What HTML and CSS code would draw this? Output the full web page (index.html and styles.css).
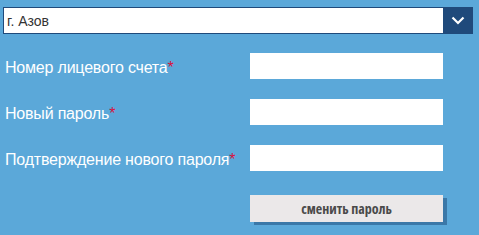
FILE: index.html
```html
<!DOCTYPE html>
<html lang="ru">
<head>
<meta charset="utf-8">
<link rel="stylesheet" href="styles.css">
</head>
<body>
<div class="page">
  <div class="select">
    <span class="select-text">г. Азов</span>
    <span class="select-btn">
      <svg width="14" height="9" viewBox="0 0 14 9"><path d="M1.5 1.5 L7 7 L12.5 1.5" fill="none" stroke="#fff" stroke-width="2.2"/></svg>
    </span>
  </div>
  <form class="form">
    <label class="label">Номер лицевого счета<span class="req">*</span></label>
    <input class="input" type="text">
    <label class="label">Новый пароль<span class="req">*</span></label>
    <input class="input" type="password">
    <label class="label">Подтверждение нового пароля<span class="req">*</span></label>
    <input class="input" type="password">
    <span></span>
    <button class="btn" type="button">сменить пароль</button>
  </form>
</div>
</body>
</html>
```
FILE: styles.css
```css
html, body {
  margin: 0;
  padding: 0;
  background: #5ba8d9;
}
.page {
  width: 479px;
  height: 235px;
  padding-top: 7px;
  box-sizing: border-box;
  font-family: "Liberation Sans", Arial, sans-serif;
}
.select {
  margin-left: 3px;
  width: 470px;
  height: 27px;
  box-sizing: border-box;
  border: 1px solid #1f4a7b;
  background: #fff;
  display: flex;
  align-items: stretch;
}
.select-text {
  flex: 1;
  display: flex;
  align-items: center;
  padding-left: 3px;
  font-size: 14px;
  color: #333;
}
.select-btn {
  width: 29px;
  background: #1f4a7b;
  display: flex;
  align-items: center;
  justify-content: center;
}
.form {
  display: grid;
  grid-template-columns: 245px 193px;
  row-gap: 20px;
  margin: 19px 0 0 5px;
  align-items: center;
}
.label {
  color: #fff;
  font-size: 16px;
  padding-top: 4px;
  white-space: nowrap;
  letter-spacing: -0.2px;
}
.req {
  color: #d6123e;
  font-size: 16px;
}
.input {
  height: 26px;
  box-sizing: border-box;
  border: 0;
  margin: 0;
  padding: 0;
  background: #fff;
}
.btn {
  margin-top: 4px;
  height: 27px;
  border: 0;
  padding: 0;
  background: #ebe8e9;
  box-shadow: 4px 3px 0 #3b78a8;
  font-family: "Open Sans", sans-serif;
  font-stretch: 75%;
  font-weight: 700;
  font-size: 14px;
  color: #4a4a4a;
}
```
